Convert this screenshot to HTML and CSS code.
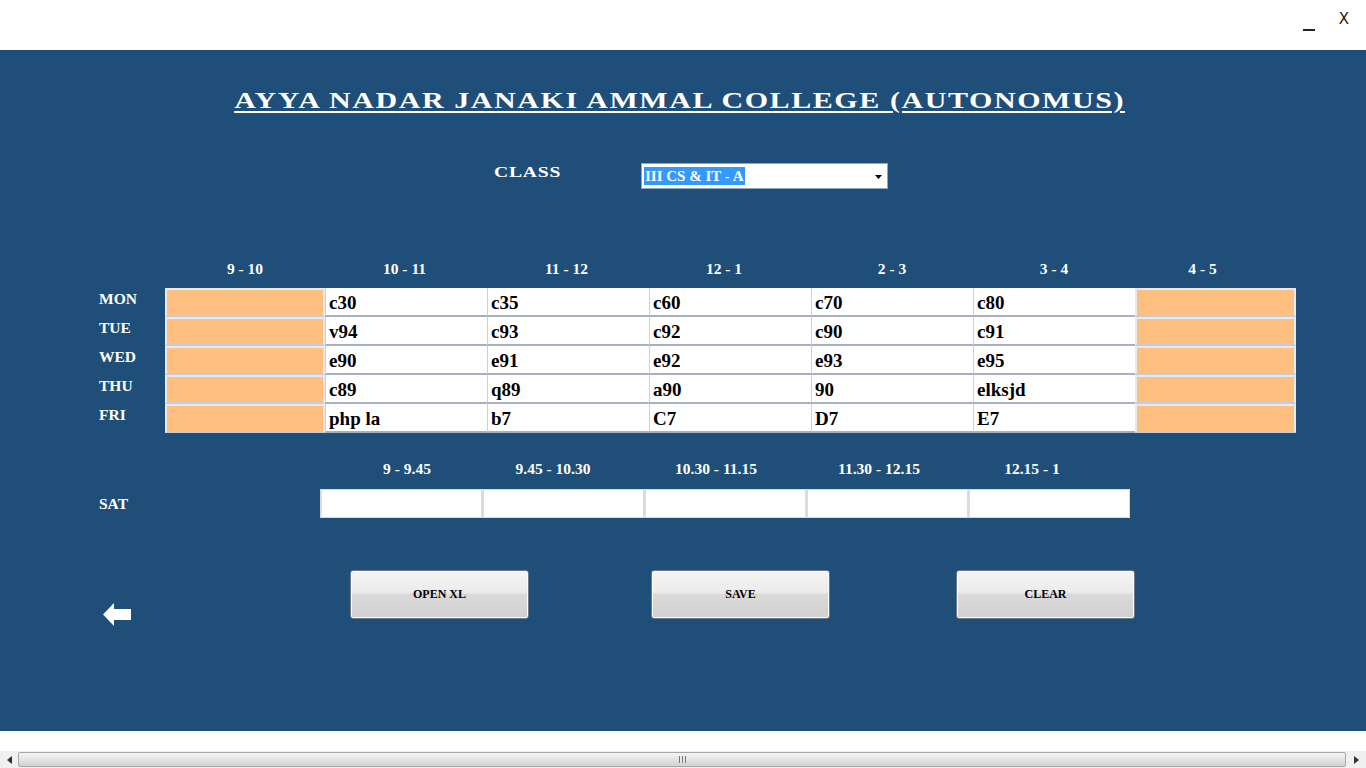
FILE: index.html
```html
<!DOCTYPE html>
<html>
<head>
<meta charset="utf-8">
<link rel="stylesheet" href="styles.css">
</head>
<body>
<div class="topbar">
  <span class="minimize"></span>
  <span class="close">X</span>
</div>
<main class="panel">
  <div class="titlewrap"><h1 class="title">AYYA NADAR JANAKI AMMAL COLLEGE (AUTONOMUS)</h1></div>
  <div class="classrow">
    <span class="classlabel"><span class="wide">CLASS</span></span>
    <div class="select">
      <span class="selected">III CS &amp; IT - A</span>
      <svg class="caret" width="7" height="4" viewBox="0 0 7 4"><path d="M0 0H7L3.5 4Z" fill="#000"/></svg>
    </div>
  </div>

  <div class="timetable">
    <div class="hdr blank"></div>
    <div class="hdr">9 - 10</div>
    <div class="hdr">10 - 11</div>
    <div class="hdr">11 - 12</div>
    <div class="hdr shift-6">12 - 1</div>
    <div class="hdr">2 - 3</div>
    <div class="hdr">3 - 4</div>
    <div class="hdr shift-13">4 - 5</div>

    <div class="day">MON</div>
    <div class="cell orange"></div>
    <div class="cell">c30</div><div class="cell">c35</div><div class="cell">c60</div><div class="cell">c70</div><div class="cell">c80</div>
    <div class="cell orange"></div>

    <div class="day">TUE</div>
    <div class="cell orange"></div>
    <div class="cell">v94</div><div class="cell">c93</div><div class="cell">c92</div><div class="cell">c90</div><div class="cell">c91</div>
    <div class="cell orange"></div>

    <div class="day">WED</div>
    <div class="cell orange"></div>
    <div class="cell">e90</div><div class="cell">e91</div><div class="cell">e92</div><div class="cell">e93</div><div class="cell">e95</div>
    <div class="cell orange"></div>

    <div class="day">THU</div>
    <div class="cell orange"></div>
    <div class="cell">c89</div><div class="cell">q89</div><div class="cell">a90</div><div class="cell">90</div><div class="cell">elksjd</div>
    <div class="cell orange"></div>

    <div class="day">FRI</div>
    <div class="cell orange"></div>
    <div class="cell">php la</div><div class="cell">b7</div><div class="cell">C7</div><div class="cell">D7</div><div class="cell">E7</div>
    <div class="cell orange"></div>
  </div>

  <div class="sattable">
    <div class="hdr blank"></div>
    <div class="hdr shift-p6">9 - 9.45</div>
    <div class="hdr shift-10">9.45 - 10.30</div>
    <div class="hdr shift-9">10.30 - 11.15</div>
    <div class="hdr shift-8">11.30 - 12.15</div>
    <div class="hdr shift-17">12.15 - 1</div>
    <div class="day sat">SAT</div>
    <div class="satcell"></div><div class="satcell"></div><div class="satcell"></div><div class="satcell"></div><div class="satcell"></div>
  </div>

  <div class="actions">
    <div class="back">
      <svg width="29" height="23" viewBox="0 0 29 23"><path d="M0 11.5L11 0V6H28V17H11V23Z" fill="#fff"/></svg>
    </div>
    <button class="btn">OPEN XL</button>
    <button class="btn">SAVE</button>
    <button class="btn">CLEAR</button>
  </div>
</main>
<footer class="footer">
  <div class="scrollbar">
    <div class="arrow left"><svg width="5" height="8" viewBox="0 0 5 8"><path d="M5 0V8L0 4Z" fill="#333"/></svg></div>
    <div class="track"><div class="thumb"><span class="grip"></span></div></div>
    <div class="arrow right"><svg width="5" height="8" viewBox="0 0 5 8"><path d="M0 0V8L5 4Z" fill="#333"/></svg></div>
  </div>
</footer>
</body>
</html>
```

FILE: styles.css
```css
* { box-sizing: border-box; }
html, body { margin: 0; padding: 0; }
body {
  width: 1366px;
  height: 768px;
  overflow: hidden;
  background: #fff;
  font-family: "Liberation Serif", "Times New Roman", serif;
}

.topbar {
  height: 50px;
  display: flex;
  justify-content: flex-end;
  align-items: flex-start;
  font-family: "DejaVu Sans", sans-serif;
  color: #222;
}
.minimize {
  width: 12px;
  height: 2px;
  background: #222;
  margin-top: 29px;
  margin-right: 24px;
}
.close {
  font-size: 15px;
  margin-top: 10px;
  margin-right: 17px;
}

.panel {
  height: 681px;
  background: #1f4e79;
  color: #fff;
  padding-top: 38px;
}

.titlewrap {
  display: flex;
  justify-content: center;
}
.title {
  margin: 0;
  display: inline-block;
  font-size: 23px;
  font-weight: bold;
  letter-spacing: 1.2px;
  text-decoration: underline;
  text-decoration-thickness: 2px;
  text-underline-offset: 3px;
  line-height: 26px;
  transform: scaleX(1.305);
  transform-origin: center;
  padding-right: 5px;
  white-space: nowrap;
}

.classrow {
  display: flex;
  align-items: center;
  margin-top: 49px;
  padding-left: 494px;
  height: 26px;
}
.classlabel {
  font-size: 15px;
  font-weight: bold;
  width: 147px;
  margin-top: -8px;
}
.wide {
  display: inline-block;
  letter-spacing: 0.6px;
  transform: scaleX(1.31);
  transform-origin: left center;
}
.select {
  width: 247px;
  height: 26px;
  background: #fff;
  border: 1px solid #8fa6c0;
  display: flex;
  align-items: center;
  justify-content: space-between;
  padding: 0 5px 0 2px;
}
.selected {
  background: #3399ff;
  color: #fff;
  font-weight: bold;
  font-size: 15px;
  line-height: 18px;
  padding: 0 1px;
}
.caret { margin-top: 2px; }

.timetable {
  display: grid;
  grid-template-columns: 66px 160px repeat(5, 162px) 161px;
  margin-top: 72px;
  padding-left: 99px;
}
.hdr {
  text-align: center;
  font-weight: bold;
  font-size: 15.5px;
  height: 27px;
  line-height: 16px;
}
.timetable .hdr:nth-child(3),
.timetable .hdr:nth-child(4) { padding-right: 3px; }
.shift-6 { padding-right: 12px; }
.shift-13 { padding-right: 26px; }
.shift-p6 { padding-left: 12px; }
.shift-10 { padding-right: 20px; }
.shift-9 { padding-right: 18px; }
.shift-8 { padding-right: 16px; }
.shift-17 { padding-right: 34px; }
.day {
  font-weight: bold;
  font-size: 15.5px;
  line-height: 18px;
  height: 29px;
  padding-top: 2px;
}
.cell {
  height: 29px;
  background: #fff;
  color: #000;
  font-weight: bold;
  font-size: 19px;
  line-height: 26px;
  padding-top: 2px;
  padding-left: 3px;
  border-left: 1px solid #c9cfdb;
  border-bottom: 2px solid #a7b0c2;
}
.cell.orange {
  background: #ffbf80;
  border: 2px solid #e6e9f0;
  border-bottom: 2px solid #c5cbd8;
}
.timetable > .cell:nth-child(8n+2) { border-left: 2px solid #e6e9f0; }
.timetable > .cell:nth-child(8n) { border-right: 2px solid #e6e9f0; }

.sattable {
  display: grid;
  grid-template-columns: 221px repeat(5, 162px);
  margin-top: 28px;
  padding-left: 99px;
}
.sattable .hdr { height: 28px; }
.day.sat { padding-top: 6px; height: 29px; }
.satcell {
  height: 29px;
  background: #fff;
  border: 1px solid #d7dbe3;
  border-left-width: 2px;
}

.actions {
  display: flex;
  align-items: flex-start;
  margin-top: 52px;
  padding-left: 103px;
}
.back {
  width: 29px;
  height: 23px;
  margin-top: 33px;
  margin-right: 218px;
}
.back svg { display: block; }
.btn {
  width: 179px;
  height: 49px;
  border: 1px solid #6f7a86;
  border-radius: 3px;
  background: linear-gradient(#f4f4f4 0%, #ececec 45%, #dadada 50%, #d0d0d0 100%);
  box-shadow: inset 0 0 0 1px #fbfbfb;
  font-family: "Liberation Serif", serif;
  font-weight: bold;
  font-size: 12px;
  color: #000;
  padding: 0;
  margin-right: 122px;
}
.btn + .btn + .btn { margin-left: 4px; }

.footer {
  height: 37px;
  padding-top: 20px;
  background: #fff;
}
.scrollbar {
  display: flex;
  height: 17px;
  background: #f0f0f0;
}
.arrow {
  width: 18px;
  display: flex;
  align-items: center;
  justify-content: center;
}
.arrow.right { width: 20px; }
.track {
  flex: 1;
  padding: 1px 0;
}
.thumb {
  height: 100%;
  border: 1px solid #a6a6a6;
  border-radius: 2px;
  background: linear-gradient(#f4f4f4, #e4e4e4 50%, #d2d2d2);
  display: flex;
  align-items: center;
  justify-content: center;
}
.grip {
  width: 7px;
  height: 7px;
  background: repeating-linear-gradient(90deg, #777 0 1px, #e8e8e8 1px 3px);
}
```
